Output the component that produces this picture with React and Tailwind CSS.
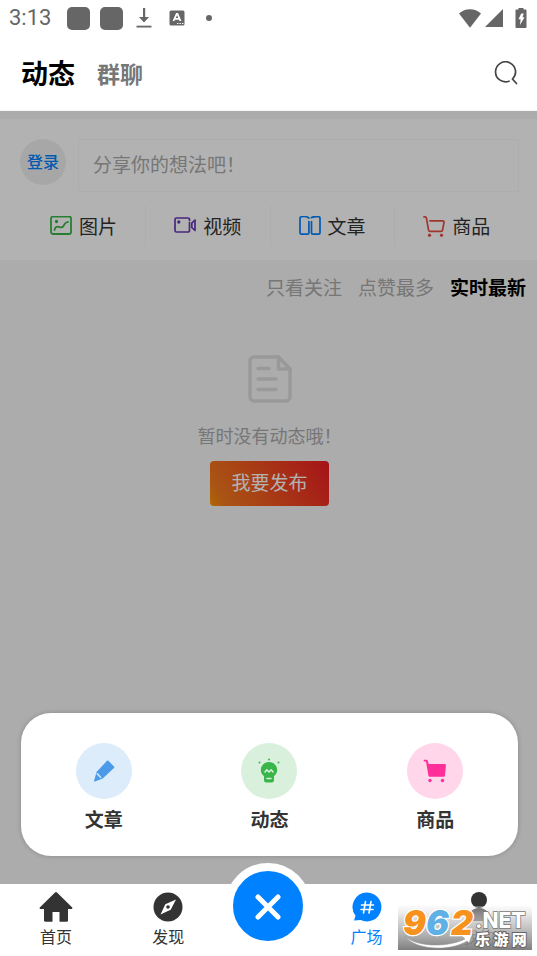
import { useState } from 'react';

const actions = [
  { key: 'image', label: '图片', icon: ImageIcon },
  { key: 'video', label: '视频', icon: VideoIcon },
  { key: 'article', label: '文章', icon: BookIcon },
  { key: 'goods', label: '商品', icon: CartIcon },
];

const filters = ['只看关注', '点赞最多', '实时最新'];

const publishItems = [
  { key: 'article', label: '文章', icon: PencilIcon, tone: 'bg-[#dcecfb] text-[#4b9bea]' },
  { key: 'moment', label: '动态', icon: BulbIcon, tone: 'bg-[#d9f0dd] text-[#39b54a]' },
  { key: 'goods', label: '商品', icon: SolidCartIcon, tone: 'bg-[#ffd6ea] text-[#ff2f9a]' },
];

function ImageIcon() {
  return (
    <svg viewBox="0 0 22 20" className="w-[22px] h-5 text-[#39b54a]" fill="none" stroke="currentColor" strokeWidth="1.8" strokeLinecap="round" strokeLinejoin="round">
      <rect x="1" y="0.5" width="20" height="17.5" rx="2" />
      <path d="M4.500 14c.8-2.800 2.300-4 4.200-3.200 1.800.8 3.300 1.500 4.600-.5 1.200-2.200 1.200-4 4.700-4.500" />
      <circle cx="6.500" cy="5.500" r=".8" fill="currentColor" />
    </svg>
  );
}

function VideoIcon() {
  return (
    <svg viewBox="0 0 22 20" className="w-[22px] h-5 text-[#6739b6]" fill="none" stroke="currentColor" strokeWidth="1.700" strokeLinecap="round" strokeLinejoin="round">
      <path d="M15.500 4.500V3.500A1.500 1.500 0 0 0 14 2H2.500A1.500 1.500 0 0 0 1 3.500v11A1.500 1.500 0 0 0 2.500 16H14a1.500 1.500 0 0 0 1.500-1.500V6.500" />
      <path d="M17.800 7.200 21 4v10.500l-3.200-3z" />
      <circle cx="4.800" cy="6" r=".8" fill="currentColor" />
    </svg>
  );
}

function BookIcon() {
  return (
    <svg viewBox="0 0 22 20" className="w-[22px] h-5 text-[#0081ff]" fill="none" stroke="currentColor" strokeWidth="1.700" strokeLinecap="round" strokeLinejoin="round">
      <path d="M9.900 2C8 .6 5 .3 2.500.7 1.500.9 1 1.300 1 2.200v14.500c0 1 .5 1.500 1.500 1.500h6c1 0 1.400-.6 1.400-1.500V5.500" />
      <path d="M12.500 1.600c2-.9 5-1.200 7-.9 1 .1 1.500.6 1.500 1.500v14.500c0 1-.5 1.500-1.500 1.500h-5.600c-1 0-1.400-.6-1.400-1.500V5.500" />
    </svg>
  );
}

function CartIcon() {
  return (
    <svg viewBox="0 0 22 21" className="w-[22px] h-[21px] text-[#e54d42]" fill="none" stroke="currentColor" strokeWidth="1.700" strokeLinecap="round" strokeLinejoin="round">
      <path d="M1 .9h1.200c.7 0 1 .4 1.200 1L5.500 13.800c.2 1 .7 1.500 1.600 1.500H18c.9 0 1.500-.5 1.600-1.500L21 6.300c.1-.9-.3-1.500-1.200-1.500H7" />
      <circle cx="6.500" cy="19.300" r="1.200" fill="currentColor" strokeWidth="1" />
      <circle cx="18.500" cy="19.300" r="1.200" fill="currentColor" strokeWidth="1" />
    </svg>
  );
}

function PencilIcon() {
  return (
    <svg viewBox="0 0 22 22" className="size-[22px]" fill="currentColor">
      <path d="M14 .8a1 1 0 0 1 1.400 0l5.600 5.700a1 1 0 0 1 0 1.400L9.700 18.600 2 21.600c-.6.200-1.100-.2-.9-.8L3.500 12z" />
      <path d="m3.800 13.200 4.200 4.600" stroke="#dcecfb" strokeWidth="1.400" />
    </svg>
  );
}

function BulbIcon() {
  return (
    <svg viewBox="0 0 24 26" className="w-6 h-[26px]" fill="currentColor">
      <path d="M12 4a8 8 0 0 0-8.200 7.900c0 2.800 1.500 4.600 3.200 6.100V22c0 1.700 1 2.500 2.500 2.500h5c1.500 0 2.500-.8 2.500-2.500v-4c1.700-1.500 3.200-3.300 3.200-6.100A8 8 0 0 0 12 4z" />
      <path d="m8 14 1.800-2.200L12 14l2.200-2.200L16 14M10 20.500h4" fill="none" stroke="#d9f0dd" strokeWidth="1.500" strokeLinecap="round" strokeLinejoin="round" />
      <circle cx="12" cy="1.500" r="1" />
      <circle cx="2.500" cy="4.500" r="1" />
      <circle cx="21.500" cy="4.500" r="1" />
    </svg>
  );
}

function SolidCartIcon() {
  return (
    <svg viewBox="0 0 24 24" className="size-6" fill="currentColor">
      <path d="M1.500.8h2c.7 0 1.100.4 1.300 1L5.700 5h16c.8 0 1.300.6 1.200 1.400l-.9 10.100c-.1.800-.7 1.300-1.500 1.300H7c-.8 0-1.400-.4-1.600-1.300L3 2.500H1.500a.85.85 0 0 1 0-1.700z" />
      <circle cx="7" cy="21.500" r="1.700" />
      <circle cx="19.500" cy="21.500" r="1.700" />
    </svg>
  );
}

function StatusBar() {
  return (
    <div className="flex h-9 items-center pr-[10px] pl-[9px] text-[#666]">
      <span className="font-[Roboto] text-[22px] leading-6">3:13</span>
      <div className="ml-4 flex items-center">
        <span className="size-[23px] rounded-[5px] bg-[#666]" />
        <span className="ml-[10px] size-[23px] rounded-[5px] bg-[#666]" />
        <svg viewBox="0 0 16 20" className="ml-[13px] w-4 h-5" fill="currentColor">
          <path d="M7 0h2.200v9H13l-5 5.500L3 9h4z" />
          <path d="M.5 17.700h15V19.500H.5z" />
        </svg>
        <svg viewBox="0 0 16 16" className="ml-[17px] size-4">
          <rect x=".5" y=".5" width="15" height="15" rx="1.500" fill="#666" />
          <path d="M4.500 11 7.700 4h.8l3 7M5.800 8.800h4.500" fill="none" stroke="#fff" strokeWidth="1.800" />
          <path d="M8 13.500h1.400M10.500 13.500h1.400M13 13.500h1.400" stroke="#fff" strokeWidth="1.200" />
        </svg>
        <span className="ml-[21px] size-[6px] rounded-full bg-[#666]" />
      </div>
      <div className="ml-auto flex items-center">
        <svg viewBox="0 0 22 19" className="w-[22px] h-[19px]" fill="currentColor">
          <path d="M0 4.500C3 1.800 7 .3 11 .3s8 1.500 11 4.200L11 18.700z" />
        </svg>
        <svg viewBox="0 0 18 18" className="ml-1 size-[18px]" fill="currentColor">
          <path d="M18 0v18H0z" />
        </svg>
        <svg viewBox="0 0 12 20" className="ml-3 w-3 h-5">
          <path d="M3.500 0h5v1.500H10.500c.8 0 1 .4 1 1V19c0 .7-.4 1-1 1h-9c-.7 0-1-.4-1-1V2.500c0-.7.400-1 1-1h2z" fill="#666" />
          <path d="M6.200 5.500h2.600L7.500 9.300h2L5 17l.6-5.700H3.500z" fill="#fff" />
        </svg>
      </div>
    </div>
  );
}

function Header() {
  return (
    <header className="flex h-[75px] items-center border-b border-[#f6f6f6] pr-[19px] pl-[21px]">
      <button className="text-[27px] leading-9 font-bold text-black">动态</button>
      <button className="ml-[22px] text-[23px] leading-9 font-bold text-[#777]">群聊</button>
      <button aria-label="搜索" className="ml-auto text-[#444]">
        <svg viewBox="0 0 24 24" className="size-6" fill="none" stroke="currentColor" strokeWidth="1.700" strokeLinecap="round">
          <path d="M15 20.200A10 10 0 1 1 18.500 18L22.500 22.500" />
        </svg>
      </button>
    </header>
  );
}

function Composer() {
  return (
    <section className="bg-white pt-5 pr-[18px] pb-[13px] pl-5">
      <div className="flex gap-3">
        <button className="size-[46px] shrink-0 rounded-full bg-[#f0f0f0] pb-[2px] text-base font-medium text-[#0081ff]">登录</button>
        <input
          type="text"
          aria-label="分享你的想法吧"
          placeholder="分享你的想法吧！"
          className="h-[53px] min-w-0 flex-1 border border-[#f8f8f8] px-[14px] pb-1 text-[19px] placeholder:text-[#aaa]"
        />
      </div>
      <div className="mt-[13px] grid grid-cols-4 divide-x divide-[#f8f8f8] pl-[2px]">
        {actions.map(({ key, label, icon: Icon }) => (
          <button key={key} className="flex h-[42px] items-center justify-center gap-[7px] text-[19px] text-[#333]">
            <Icon />
            {label}
          </button>
        ))}
      </div>
    </section>
  );
}

function EmptyState() {
  return (
    <div className="flex flex-col items-center pt-[54px] pl-[2px]">
      <svg viewBox="0 0 44 48" className="w-11 h-12 text-[#dcdcdc]" fill="none" stroke="currentColor" strokeWidth="3.500" strokeLinecap="round" strokeLinejoin="round">
        <path d="M30.500 2H6a4 4 0 0 0-4 4v36a4 4 0 0 0 4 4h32a4 4 0 0 0 4-4V14z" />
        <path d="M30.500 2v12H42" />
        <path d="M10 13.500h11M10 24h18M10 34.500h18" />
      </svg>
      <p className="mt-[18px] text-[18px] leading-7 text-[#aaa]">暂时没有动态哦！</p>
      <button className="mt-3 h-[45px] rounded-[4px] bg-[linear-gradient(60deg,#ff9700,#f37b1d_10%,#ed1c24)] px-[21px] pb-[2px] text-[19px] text-white">
        我要发布
      </button>
    </div>
  );
}

function PublishPanel() {
  return (
    <div className="absolute right-[19px] bottom-7 left-[21px] grid h-[143px] grid-cols-3 rounded-[30px] bg-white shadow-[0_0_5px_rgba(0,0,0,0.2)]">
      {publishItems.map(({ key, label, icon: Icon, tone }) => (
        <button key={key} className="flex flex-col items-center pt-[30px] text-[19px] leading-7 font-bold text-[#333]">
          <span className={`mb-[6px] flex size-14 items-center justify-center rounded-full ${tone}`}>
            <Icon />
          </span>
          {label}
        </button>
      ))}
    </div>
  );
}

function Watermark() {
  return (
    <svg viewBox="0 0 134 50" className="absolute right-[5px] bottom-[6px] w-[134px] h-[50px]">
      <defs>
        <linearGradient id="plate" x1="0" y1="0" x2="0" y2="1">
          <stop offset="0" stopColor="#eee" stopOpacity=".3" />
          <stop offset=".3" stopColor="#c8c8c8" stopOpacity=".7" />
          <stop offset="1" stopColor="#777" stopOpacity=".95" />
        </linearGradient>
      </defs>
      <rect y="6" width="134" height="44" fill="url(#plate)" />
      <path d="M7 36c10 11 42 12 60 3l-3-3 11-4-4 11-2-2C52 52 16 50 7 36z" fill="#fff" stroke="#999" strokeWidth=".5" />
      <g fontFamily="Inter, sans-serif" fontWeight="900" fontStyle="italic" fontSize="34" stroke="#fff" strokeWidth="2.500" paintOrder="stroke">
        <text x="5" y="35" fill="#f7921e">9</text>
        <text x="28" y="35" fill="#5fb0e5">6</text>
        <text x="53" y="35" fill="#f7921e">2</text>
      </g>
      <text x="77" y="28" fontFamily="Inter, sans-serif" fontWeight="800" fontSize="21" fill="#fff" stroke="#777" strokeWidth="1.500" paintOrder="stroke">.NET</text>
      <text x="77" y="45" fontFamily="Noto Sans CJK SC, sans-serif" fontWeight="900" fontSize="15" fill="#fff" stroke="#666" strokeWidth="2" paintOrder="stroke">乐 游 网</text>
    </svg>
  );
}

function TabBar({ open, onToggle }) {
  return (
    <nav className="relative flex h-[72px] bg-white pr-[2px] text-base leading-6 text-[#333]">
      <a href="#home" className="flex flex-1 flex-col items-center gap-px pt-[7px]">
        <svg viewBox="0 0 34 32" className="w-[34px] h-8" fill="currentColor">
          <path d="M16 1.500a1.400 1.400 0 0 1 2 0l15 14.700c.8.900.4 1.800-.7 1.800H29v11.500c0 .8-.5 1.200-1.200 1.200h-7.300V21h-7v9.700H6.200c-.7 0-1.200-.4-1.200-1.200V18H1.700C.6 18 .2 17.100 1 16.200z" />
        </svg>
        首页
      </a>
      <a href="#discover" className="flex flex-1 flex-col items-center gap-px pt-[7px]">
        <svg viewBox="0 0 32 32" className="size-8">
          <circle cx="16" cy="16" r="14.500" fill="#333" />
          <path d="M24 8.500 18.700 18.700 8.500 23.500 13.300 13.300z" fill="#fff" />
          <circle cx="16" cy="16" r="1.800" fill="#333" />
        </svg>
        发现
      </a>
      <div className="flex w-[86px] shrink-0 justify-center">
        <button
          aria-label="关闭"
          aria-expanded={open}
          onClick={onToggle}
          className="-mt-[21px] flex size-[86px] shrink-0 items-center justify-center rounded-full border-8 border-white bg-[#0081ff] text-white"
        >
          <svg viewBox="0 0 28 28" className="size-7" stroke="currentColor" strokeWidth="5" strokeLinecap="round">
            <path d="m4 5 20 20M24 5 4 25" />
          </svg>
        </button>
      </div>
      <a href="#square" className="flex flex-1 flex-col items-center gap-px pt-[7px] text-[#0081ff]">
        <svg viewBox="0 0 32 32" className="size-8">
          <path d="M16 1.500a14.500 14.500 0 1 1-6.500 27.500L3 29.500l1.500-4.800A14.500 14.500 0 0 1 16 1.500z" fill="currentColor" />
          <path d="M14.500 10.500 12.500 22M20 10.500 18 22M10.500 14h12M10 18.500h12" stroke="#fff" strokeWidth="1.600" strokeLinecap="round" />
        </svg>
        广场
      </a>
      <a href="#mine" className="flex flex-1 flex-col items-center gap-px pt-[7px]">
        <svg viewBox="0 0 32 32" className="size-8" fill="currentColor">
          <circle cx="16" cy="9" r="8" />
          <path d="M5 30c0-8 4-13 11-13s11 5 11 13z" />
        </svg>
        我的
      </a>
      <Watermark />
    </nav>
  );
}

export default function App() {
  const [open, setOpen] = useState(true);
  const [activeFilter, setActiveFilter] = useState('实时最新');

  return (
    <div className="flex min-h-screen flex-col bg-white font-['Noto_Sans_CJK_SC',sans-serif]">
      <StatusBar />
      <Header />
      <main className="relative flex-1 bg-[#f6f6f6] pt-2">
        <Composer />
        <div className="flex justify-end gap-4 pt-[13px] pr-[11px] text-[19px] leading-7">
          {filters.map((name) => (
            <button
              key={name}
              onClick={() => setActiveFilter(name)}
              className={activeFilter === name ? 'font-bold text-black' : 'text-[#aaa]'}
            >
              {name}
            </button>
          ))}
        </div>
        <EmptyState />

        {open && (
          <div className="absolute inset-0 bg-black/30">
            <PublishPanel />
          </div>
        )}
      </main>
      <TabBar open={open} onToggle={() => setOpen(!open)} />
    </div>
  );
}
